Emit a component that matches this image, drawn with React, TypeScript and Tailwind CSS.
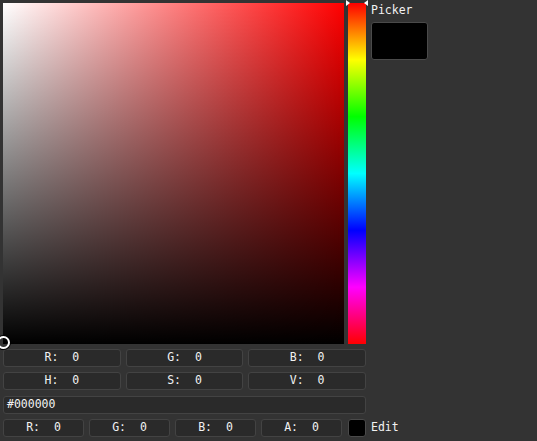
import React from 'react';

const mono = "font-['DejaVu_Sans_Mono',monospace] text-[11.5px] leading-none text-[#f2f2f2]";

const Field: React.FC<{ label: string; value: string }> = ({ label, value }) => (
  <div className={`flex-1 h-[18px] flex items-center justify-center rounded-[3px] border border-[#434343] bg-[#2a2a2a] whitespace-pre ${mono}`}>
    {`${label}:  ${value}`}
  </div>
);

export default function App() {
  return (
    <div className="w-[537px] h-[441px] bg-[#333333] pt-[3px] pl-[3px] overflow-hidden">
      <div className="flex">
        {/* saturation / value square */}
        <div className="relative w-[341px] h-[341px] bg-[linear-gradient(to_top,#000,rgba(0,0,0,0)),linear-gradient(to_right,#fff,#f00)]">
          <div className="absolute left-[-6px] bottom-[-5px] w-[13px] h-[13px] rounded-full border-[2px] border-white ring-1 ring-black" />
        </div>

        {/* hue bar */}
        <div className="relative ml-[4px] w-[18px] h-[341px] bg-[linear-gradient(to_bottom,#f00,#ff0,#0f0,#0ff,#00f,#f0f,#f00)]">
          <div className="absolute left-[-2px] top-[-3px] w-0 h-0 border-y-[3px] border-y-transparent border-l-[4px] border-l-white" />
          <div className="absolute right-[-2px] top-[-3px] w-0 h-0 border-y-[3px] border-y-transparent border-r-[4px] border-r-white" />
        </div>

        {/* picker preview */}
        <div className="ml-[5px] flex flex-col">
          <div className={`mt-[2px] ${mono}`}>Picker</div>
          <div className="mt-[5px] w-[57px] h-[38px] bg-black rounded-[3px] border border-[#4a4a4a]" />
        </div>
      </div>

      <div className="w-[363px] mt-[5px] flex gap-[5px]">
        <Field label="R" value="0" />
        <Field label="G" value="0" />
        <Field label="B" value="0" />
      </div>
      <div className="w-[363px] mt-[5px] flex gap-[5px]">
        <Field label="H" value="0" />
        <Field label="S" value="0" />
        <Field label="V" value="0" />
      </div>
      <div className={`w-[363px] mt-[6px] h-[18px] flex items-center px-[3px] rounded-[3px] border border-[#434343] bg-[#2a2a2a] ${mono}`}>
        #000000
      </div>
      <div className="mt-[5px] flex items-center">
        <div className="w-[363px] flex gap-[5px] items-center">
          <Field label="R" value="0" />
          <Field label="G" value="0" />
          <Field label="B" value="0" />
          <Field label="A" value="0" />
          <div className="ml-[1px] w-[18px] h-[18px] bg-black rounded-[3px] border border-[#4a4a4a]" />
        </div>
        <div className={`ml-[5px] ${mono}`}>Edit</div>
      </div>
    </div>
  );
}
